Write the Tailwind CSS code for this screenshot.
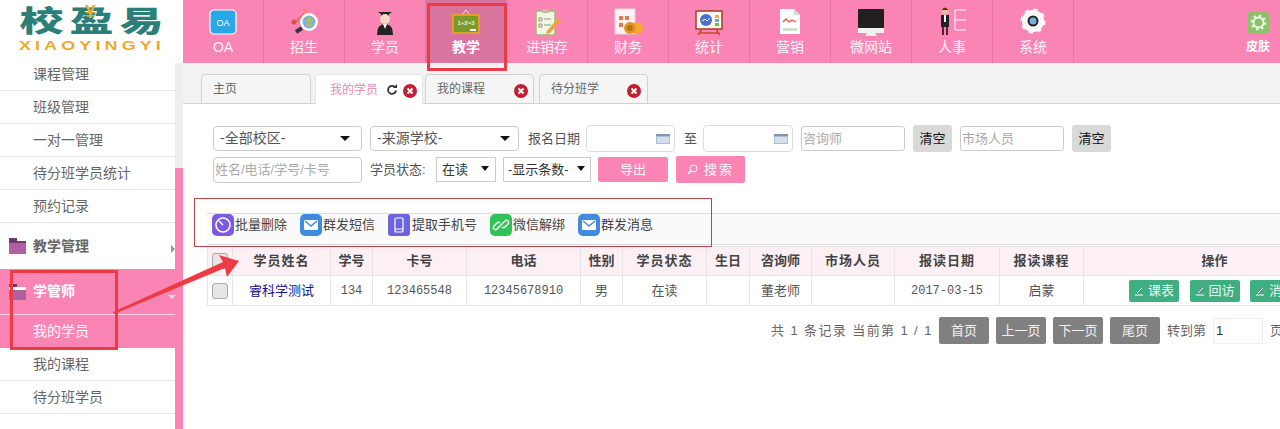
<!DOCTYPE html>
<html lang="zh-CN">
<head>
  <meta charset="UTF-8" />
  <title>校盈易 - 我的学员</title>
  <script src="https://cdn.jsdelivr.net/npm/@tailwindcss/browser@4"></script>
</head>
<body class="relative h-[429px] w-[1280px] overflow-hidden bg-white font-['Liberation_Sans','Noto_Sans_CJK_SC',sans-serif] text-[13px] text-[#555]">

  <!-- Header -->
  <header class="flex h-[63px] bg-[#fa85b5]">
    <div class="relative flex w-[183px] flex-col items-center overflow-hidden bg-white pt-[8px]">
      <div class="flex h-[28px] origin-top scale-y-[0.66] items-start gap-[6px] text-[44px] leading-[44px] font-black text-[#2b7f78]"><span>校</span><span>盈</span><span>易</span></div>
      <span class="absolute top-[2px] left-[85px] text-[19px] leading-none font-black text-[#f0a92e]">¥</span>
      <div class="mt-[4px] scale-x-[1.38] font-['Liberation_Sans',sans-serif] text-[13px] leading-[11px] font-bold tracking-[3px] text-[#eda92f]">XIAOYINGYI</div>
    </div>

    <nav class="flex flex-1 text-[14px] text-white/90">
      <a class="flex w-[81px] flex-col items-center border-r border-[#e873a4] pt-[8px]">
        <svg class="h-[28px] w-[32px]" viewBox="0 0 32 28"><rect x="3" y="2" width="26" height="24" rx="4" fill="#2aa7e6" stroke="#fff" stroke-width="1.2"/><text x="16" y="18" font-size="9" fill="#fff" text-anchor="middle" font-family="Liberation Sans">OA</text></svg>
        <span class="mt-[2px] leading-[18px]">OA</span>
      </a>
      <a class="flex w-[81px] flex-col items-center border-r border-[#e873a4] pt-[8px]">
        <svg class="h-[28px] w-[32px]" viewBox="0 0 32 28"><path d="M8 24 14 20" stroke="#334" stroke-width="4"/><path d="M8 14l8-8" stroke="#ef6a55" stroke-width="2"/><circle cx="6" cy="14" r="2.5" fill="#e84a4a"/><circle cx="17" cy="3" r="2" fill="#ee8b55"/><circle cx="21" cy="14" r="9" fill="#fff"/><circle cx="21" cy="14" r="6.5" fill="#7fb2d8"/><circle cx="21" cy="12" r="2.5" fill="#b5c83a"/><path d="M17 18q4-5 8 0z" fill="#b5c83a"/></svg>
        <span class="mt-[2px] leading-[18px]">招生</span>
      </a>
      <a class="flex w-[81px] flex-col items-center border-r border-[#e873a4] pt-[8px]">
        <svg class="h-[28px] w-[32px]" viewBox="0 0 32 28"><path d="M9 4h14l-3 2v3h-8V6z" fill="#222"/><circle cx="16" cy="11" r="5" fill="#f4d9c4"/><path d="M8 27q0-11 8-11t8 11z" fill="#222"/><path d="M14 16l2 5 2-5z" fill="#fff"/></svg>
        <span class="mt-[2px] leading-[18px]">学员</span>
      </a>
      <a class="flex w-[81px] flex-col items-center border-r border-[#e873a4] bg-[#d9749f] pt-[8px] font-bold text-white">
        <svg class="h-[28px] w-[32px]" viewBox="0 0 32 28"><path d="M12 7l4-5 4 5" fill="none" stroke="#f4e3d0" stroke-width="1"/><rect x="3" y="7" width="26" height="18" fill="#7a9a2c" stroke="#eba51f" stroke-width="1.6"/><text x="16" y="17" font-size="6" fill="#f3f3d8" text-anchor="middle" font-family="Liberation Sans">1+2=3</text><rect x="20" y="21" width="6" height="2" fill="#fff"/></svg>
        <span class="mt-[2px] leading-[18px]">教学</span>
      </a>
      <a class="flex w-[81px] flex-col items-center border-r border-[#e873a4] pt-[8px]">
        <svg class="h-[28px] w-[32px]" viewBox="0 0 32 28"><rect x="5" y="3" width="19" height="24" rx="1.5" fill="#f2f4e6" stroke="#9cbc72" stroke-width="1.5"/><rect x="11" y="1" width="7" height="4" fill="#c9b9a4"/><path d="M8 10h3v3H8zM8 16h3v3H8zM13 11h7M13 17h7" stroke="#8a9a7a" fill="none"/><path d="M16 23 27 10l3 2-11 13-4 1z" fill="#f0a13a"/></svg>
        <span class="mt-[2px] leading-[18px]">进销存</span>
      </a>
      <a class="flex w-[81px] flex-col items-center border-r border-[#e873a4] pt-[8px]">
        <svg class="h-[28px] w-[32px]" viewBox="0 0 32 28"><rect x="3" y="1" width="20" height="25" fill="#fdf3f6" stroke="#e8d5dc"/><path d="M7 8h4v4H7zM13 8h4v4h-4zM7 15h4v4H7z" fill="#e87a50"/><circle cx="25" cy="20" r="6" fill="#f4a933"/><circle cx="18" cy="20" r="6" fill="#e59420"/><circle cx="18" cy="20" r="3" fill="#b97316"/></svg>
        <span class="mt-[2px] leading-[18px]">财务</span>
      </a>
      <a class="flex w-[81px] flex-col items-center border-r border-[#e873a4] pt-[8px]">
        <svg class="h-[28px] w-[32px]" viewBox="0 0 32 28"><rect x="3" y="3" width="26" height="18" fill="#fdf5f0" stroke="#a5482f" stroke-width="1.6"/><circle cx="13" cy="12" r="6" fill="#4a6fd0"/><path d="M9 13l3-2 2 2 3-3" stroke="#fff" fill="none"/><path d="M22 7h4v3h-4z" fill="#f0b040"/><path d="M22 11h4v3h-4z" fill="#5bb0d8"/><path d="M22 15h4v3h-4z" fill="#6cb86c"/><path d="M9 21 5 27M23 21l4 6M6 25h20" stroke="#c8492b" stroke-width="1.5"/></svg>
        <span class="mt-[2px] leading-[18px]">统计</span>
      </a>
      <a class="flex w-[81px] flex-col items-center border-r border-[#e873a4] pt-[8px]">
        <svg class="h-[28px] w-[32px]" viewBox="0 0 32 28"><path d="M6 1h14l6 6v19H6z" fill="#fff"/><path d="M20 1l6 6h-6z" fill="#d9d9d9"/><path d="M9 14l3-3 3 3 3-2 4 2" stroke="#e0553d" stroke-width="1.3" fill="none"/><path d="M9 20h14v3H9z" fill="#cfe3c8"/></svg>
        <span class="mt-[2px] leading-[18px]">营销</span>
      </a>
      <a class="flex w-[81px] flex-col items-center border-r border-[#e873a4] pt-[8px]">
        <svg class="h-[28px] w-[32px]" viewBox="0 0 32 28"><rect x="3" y="1" width="26" height="19" rx="1" fill="#231f20"/><rect x="3" y="20" width="26" height="5" fill="#f2f2f2"/><path d="M12 25h8l2 3H10z" fill="#f2f2f2"/></svg>
        <span class="mt-[2px] leading-[18px]">微网站</span>
      </a>
      <a class="flex w-[81px] flex-col items-center border-r border-[#e873a4] pt-[6px]">
        <svg class="h-[30px] w-[32px]" viewBox="0 0 32 30"><circle cx="9" cy="5" r="3.6" fill="#e9b99a"/><path d="M5.500 4q3.500-5 7 0z" fill="#6b2b20"/><path d="M5 9h8v12H5z" fill="#222"/><path d="M8 9h2v7H8z" fill="#fff"/><path d="M6 21h2v8H6zM10 21h2v8h-2z" fill="#5b1f1f"/><path d="M19 4v20M19 4h11M19 14h11M19 24h11" stroke="#fff" fill="none"/></svg>
        <span class="mt-[2px] leading-[18px]">人事</span>
      </a>
      <a class="flex w-[81px] flex-col items-center border-r border-[#e873a4] pt-[8px]">
        <svg class="h-[28px] w-[32px]" viewBox="0 0 32 28"><circle cx="16" cy="13" r="9.500" fill="none" stroke="#fff" stroke-width="3"/><circle cx="16" cy="13" r="11" fill="none" stroke="#fff" stroke-width="3" stroke-dasharray="4 4.640"/><circle cx="16" cy="13" r="8" fill="#fff"/><circle cx="16" cy="13" r="5.500" fill="#222"/><circle cx="16" cy="13" r="3.500" fill="#78aee0"/></svg>
        <span class="mt-[2px] leading-[18px]">系统</span>
      </a>
      <a class="ml-auto flex w-[44px] flex-col items-center pt-[12px] text-[12px] font-bold text-white">
        <svg class="h-[21px] w-[21px]" viewBox="0 0 21 21"><rect width="21" height="21" rx="2" fill="#8cc36a"/><circle cx="10.500" cy="10.500" r="5" fill="none" stroke="#eef6e6" stroke-width="2"/><circle cx="10.500" cy="10.500" r="6.800" fill="none" stroke="#eef6e6" stroke-width="2" stroke-dasharray="2.500 2.840"/></svg>
        <span class="mt-[5px] leading-[18px]">皮肤</span>
      </a>
    </nav>
  </header>

  <div class="flex h-[366px]">
    <!-- Sidebar -->
    <aside class="flex w-[183px] shrink-0 overflow-hidden">
      <ul class="w-[175px] text-[14px] text-[#666]">
        <li class="flex h-[28px] items-center border-b border-[#e5e5e5] pb-[4px] pl-[33px]">课程管理</li>
        <li class="flex h-[33px] items-center border-b border-[#e5e5e5] pl-[33px]">班级管理</li>
        <li class="flex h-[33px] items-center border-b border-[#e5e5e5] pl-[33px]">一对一管理</li>
        <li class="flex h-[33px] items-center border-b border-[#e5e5e5] pl-[33px]">待分班学员统计</li>
        <li class="flex h-[33px] items-center border-b border-[#e5e5e5] pl-[33px]">预约记录</li>
        <li class="relative flex h-[46px] items-center gap-[7px] pl-[9px] font-bold">
          <svg class="h-[18px] w-[17px]" viewBox="0 0 17 18"><path d="M0 1h8v3h9v2H0z" fill="#6d3a63"/><path d="M0 6h17v11H0z" fill="#b05fa0"/></svg>
          <span>教学管理</span>
          <span class="absolute top-[22px] right-0 border-y-[4px] border-l-[4px] border-y-transparent border-l-[#999]"></span>
        </li>
        <li class="relative flex h-[46px] items-center gap-[7px] border-b border-[#fbd3e4] bg-[#fa85b5] pl-[9px] font-bold text-white">
          <svg class="h-[18px] w-[17px]" viewBox="0 0 17 18"><path d="M0 1h8v3h9v2H0z" fill="#6d3a63"/><path d="M0 4h17v3H0z" fill="#fff"/><path d="M0 7h17v10H0z" fill="#b05fa0"/></svg>
          <span>学管师</span>
          <span class="absolute top-[26px] right-[-1px] border-x-[4px] border-t-[4px] border-x-transparent border-t-[#fbd3e4]"></span>
        </li>
        <li class="flex h-[33px] items-center bg-[#fa85b5] pl-[33px] text-white">我的学员</li>
        <li class="flex h-[33px] items-center border-b border-[#e5e5e5] pl-[33px]">我的课程</li>
        <li class="flex h-[33px] items-center border-b border-[#e5e5e5] pl-[33px]">待分班学员</li>
        <li class="flex h-[33px] items-center pl-[9px]">
          <svg class="mt-[24px] h-[18px] w-[17px]" viewBox="0 0 17 18"><path d="M0 1h8v3h9v2H0z" fill="#6d3a63"/><path d="M0 6h17v11H0z" fill="#b05fa0"/></svg>
        </li>
      </ul>
      <div class="flex w-[8px] flex-col">
        <div class="h-[105px] bg-[#eeeeee]"></div>
        <div class="flex-1 bg-[#fa85b5]"></div>
      </div>
    </aside>

    <!-- Main -->
    <main class="min-w-0 flex-1 overflow-hidden">
      <!-- Tabs -->
      <div class="flex h-[41px] items-end border-b border-[#d5d5d5] bg-[#f3f3f3] pl-[18px] text-[12px]">
        <div class="-mb-px flex h-[30px] w-[110px] items-center rounded-t border border-[#d0d0d0] bg-[#f5f5f5] pl-[11px] text-[#666]">主页</div>
        <div class="relative -mb-px ml-[4px] flex h-[30px] w-[108px] items-center rounded-t border border-b-0 border-[#e5e5e5] bg-white pl-[14px] text-[#e58ab5]">
          我的学员
          <svg class="absolute top-[9px] left-[70px] h-[12px] w-[12px]" viewBox="0 0 12 12"><path d="M10 6.500A4 4 0 1 1 8.800 3" fill="none" stroke="#333" stroke-width="1.800"/><path d="M7 4h4V0z" fill="#333"/></svg>
          <svg class="absolute top-[9px] left-[87px] h-[14px] w-[14px]" viewBox="0 0 14 14"><circle cx="7" cy="7" r="7" fill="#c0202f"/><path d="M4.500 4.500l5 5M9.500 4.500l-5 5" stroke="#fff" stroke-width="2"/></svg>
        </div>
        <div class="relative -mb-px ml-[2px] flex h-[30px] w-[109px] items-center rounded-t border border-[#d0d0d0] bg-[#f5f5f5] pl-[11px] text-[#666]">
          我的课程
          <svg class="absolute top-[9px] left-[88px] h-[14px] w-[14px]" viewBox="0 0 14 14"><circle cx="7" cy="7" r="7" fill="#c0202f"/><path d="M4.500 4.500l5 5M9.500 4.500l-5 5" stroke="#fff" stroke-width="2"/></svg>
        </div>
        <div class="relative -mb-px ml-[5px] flex h-[30px] w-[109px] items-center rounded-t border border-[#d0d0d0] bg-[#f5f5f5] pl-[11px] text-[#666]">
          待分班学
          <svg class="absolute top-[9px] left-[87px] h-[14px] w-[14px]" viewBox="0 0 14 14"><circle cx="7" cy="7" r="7" fill="#c0202f"/><path d="M4.500 4.500l5 5M9.500 4.500l-5 5" stroke="#fff" stroke-width="2"/></svg>
        </div>
      </div>

      <!-- Search -->
      <div class="pt-[20px] pl-[30px]">
        <div class="flex h-[29px] items-center">
          <div class="relative w-[149px]">
            <select class="h-[25px] w-full appearance-none rounded-[4px] border border-[#ccc] bg-white pl-[6px] text-[14px] text-[#555]"><option>-全部校区-</option></select>
            <span class="absolute top-[10px] right-[12px] border-x-[5px] border-t-[5px] border-x-transparent border-t-[#111]"></span>
          </div>
          <div class="relative ml-[8px] w-[149px]">
            <select class="h-[25px] w-full appearance-none rounded-[4px] border border-[#ccc] bg-white pl-[6px] text-[14px] text-[#555]"><option>-来源学校-</option></select>
            <span class="absolute top-[10px] right-[9px] border-x-[5px] border-t-[5px] border-x-transparent border-t-[#111]"></span>
          </div>
          <span class="ml-[9px] w-[58px]">报名日期</span>
          <div class="relative w-[89px]">
            <input class="h-[27px] w-full rounded-[4px] border border-[#ddd] bg-white" />
            <svg class="absolute top-[9px] right-[5px] h-[10px] w-[14px]" viewBox="0 0 14 10"><rect width="14" height="10" fill="#a9bfd9"/><rect y="0" width="14" height="2" fill="#7d97b8"/><path d="M1 3h12v6H1z" fill="#d7dfe8"/></svg>
          </div>
          <span class="ml-[9px] w-[19px]">至</span>
          <div class="relative w-[90px]">
            <input class="h-[27px] w-full rounded-[4px] border border-[#ddd] bg-white" />
            <svg class="absolute top-[9px] right-[5px] h-[10px] w-[14px]" viewBox="0 0 14 10"><rect width="14" height="10" fill="#a9bfd9"/><rect y="0" width="14" height="2" fill="#7d97b8"/><path d="M1 3h12v6H1z" fill="#d7dfe8"/></svg>
          </div>
          <input placeholder="咨询师" class="ml-[8px] h-[25px] w-[104px] rounded-[3px] border border-[#ccc] px-[1px] placeholder:text-[#aaa]" />
          <button class="ml-[8px] h-[27px] w-[39px] rounded-[3px] bg-[#d9d9d9] text-[#111]">清空</button>
          <input placeholder="市场人员" class="ml-[8px] h-[25px] w-[104px] rounded-[3px] border border-[#ccc] px-[1px] placeholder:text-[#aaa]" />
          <button class="ml-[8px] h-[27px] w-[39px] rounded-[3px] bg-[#d9d9d9] text-[#111]">清空</button>
        </div>
        <div class="mt-[2px] flex h-[29px] items-center">
          <input placeholder="姓名/电话/学号/卡号" class="h-[26px] w-[149px] rounded-[4px] border border-[#ccc] px-[1px] placeholder:text-[#aaa]" />
          <span class="ml-[8px] w-[66px]">学员状态:</span>
          <div class="relative w-[60px]">
            <select class="h-[25px] w-full appearance-none border border-[#ccc] bg-white pl-[5px] text-[#333]"><option>在读</option></select>
            <span class="absolute top-[9px] right-[7px] border-x-[4px] border-t-[5px] border-x-transparent border-t-[#111]"></span>
          </div>
          <div class="relative ml-[7px] w-[88px]">
            <select class="h-[25px] w-full appearance-none border border-[#ccc] bg-white pl-[4px] text-[#333]"><option>-显示条数-</option></select>
            <span class="absolute top-[9px] right-[6px] border-x-[4px] border-t-[5px] border-x-transparent border-t-[#111]"></span>
          </div>
          <button class="ml-[7px] h-[25px] w-[70px] rounded-[2px] bg-[#fa85b5] text-white/90">导出</button>
          <button class="ml-[8px] flex h-[27px] w-[69px] items-center justify-center gap-[6px] rounded-[2px] bg-[#fa85b5] text-white/90">
            <svg class="h-[11px] w-[11px]" viewBox="0 0 11 11"><circle cx="6.500" cy="4.500" r="3.500" fill="none" stroke="#fff"/><path d="M4 7 1 10" stroke="#fff" stroke-width="1.400"/></svg>
            <span class="tracking-[2px]">搜索</span>
          </button>
        </div>
      </div>

      <!-- Toolbar + table -->
      <div class="mt-[29px] ml-[24px]">
        <div class="flex h-[32px] items-start gap-[13px] border-y border-[#ddd] bg-[#fafafa] pl-[5px] text-[#444]">
          <span class="flex items-center gap-[1px]">
            <svg class="h-[22px] w-[22px]" viewBox="0 0 22 22"><rect width="22" height="22" rx="5" fill="#7b59e0"/><circle cx="11" cy="11" r="7" fill="none" stroke="#fff" stroke-width="1.600"/><path d="M7 7l4 4" stroke="#fff" stroke-width="1.600"/></svg>批量删除
          </span>
          <span class="flex items-center gap-[1px]">
            <svg class="h-[22px] w-[22px]" viewBox="0 0 22 22"><rect width="22" height="22" rx="5" fill="#3f8be0"/><rect x="4" y="6" width="14" height="10" rx="1" fill="#fff"/><path d="M5 7l6 5 6-5" stroke="#3f8be0" stroke-width="1.500" fill="none"/></svg>群发短信
          </span>
          <span class="flex items-center gap-[2px]">
            <svg class="h-[22px] w-[22px]" viewBox="0 0 22 22"><rect width="22" height="22" rx="3" fill="#6d63dc"/><rect x="7" y="4" width="8" height="14" rx="1" fill="none" stroke="#fff" stroke-width="1.200"/><path d="M7 15h8" stroke="#fff"/></svg>提取手机号
          </span>
          <span class="flex items-center gap-[1px]">
            <svg class="h-[22px] w-[22px]" viewBox="0 0 22 22"><rect width="22" height="22" rx="5" fill="#2fc257"/><path d="M9 13l-2 2a2 2 0 0 1-3-3l3-3a2 2 0 0 1 3 0M13 9l2-2a2 2 0 0 1 3 3l-3 3a2 2 0 0 1-3 0M9 13l4-4" stroke="#fff" stroke-width="1.500" fill="none"/></svg>微信解绑
          </span>
          <span class="flex items-center gap-[1px]">
            <svg class="h-[22px] w-[22px]" viewBox="0 0 22 22"><rect width="22" height="22" rx="5" fill="#3f8be0"/><rect x="4" y="6" width="14" height="10" rx="1" fill="#fff"/><path d="M5 7l6 5 6-5" stroke="#3f8be0" stroke-width="1.500" fill="none"/></svg>群发消息
          </span>
        </div>

        <table class="mt-[1px] w-[1138px] table-fixed border-collapse border-t border-[#f3b9cf] text-center">
          <colgroup>
            <col class="w-[25px]" /><col class="w-[98px]" /><col class="w-[42px]" /><col class="w-[94px]" /><col class="w-[114px]" /><col class="w-[42px]" /><col class="w-[84px]" /><col class="w-[43px]" /><col class="w-[62px]" /><col class="w-[83px]" /><col class="w-[105px]" /><col class="w-[84px]" /><col class="w-[262px]" />
          </colgroup>
          <thead class="bg-[#fcf0f5] text-[13px] font-bold text-[#444]">
            <tr class="h-[29px]">
              <th class="border border-[#e6e6e6]"><span class="mx-auto block h-[16px] w-[16px] rounded-[3px] border border-[#aaa] bg-[#e6e6e6]"></span></th>
              <th class="border border-[#e6e6e6] tracking-[1px]">学员姓名</th>
              <th class="border border-[#e6e6e6]">学号</th>
              <th class="border border-[#e6e6e6]">卡号</th>
              <th class="border border-[#e6e6e6]">电话</th>
              <th class="border border-[#e6e6e6]">性别</th>
              <th class="border border-[#e6e6e6] tracking-[1px]">学员状态</th>
              <th class="border border-[#e6e6e6]">生日</th>
              <th class="border border-[#e6e6e6]">咨询师</th>
              <th class="border border-[#e6e6e6] tracking-[1px]">市场人员</th>
              <th class="border border-[#e6e6e6] tracking-[1px]">报读日期</th>
              <th class="border border-[#e6e6e6] tracking-[1px]">报读课程</th>
              <th class="border border-[#e6e6e6]">操作</th>
            </tr>
          </thead>
          <tbody class="text-[#555]">
            <tr class="h-[30px]">
              <td class="border border-[#e6e6e6]"><span class="mx-auto block h-[16px] w-[16px] rounded-[3px] border border-[#aaa] bg-[#e6e6e6]"></span></td>
              <td class="border border-[#e6e6e6] text-[#14148c]">睿科学测试</td>
              <td class="border border-[#e6e6e6] font-['Liberation_Mono',monospace] text-[12px]">134</td>
              <td class="border border-[#e6e6e6] font-['Liberation_Mono',monospace] text-[12px]">123465548</td>
              <td class="border border-[#e6e6e6] font-['Liberation_Mono',monospace] text-[12px]">12345678910</td>
              <td class="border border-[#e6e6e6]">男</td>
              <td class="border border-[#e6e6e6]">在读</td>
              <td class="border border-[#e6e6e6]"></td>
              <td class="border border-[#e6e6e6]">董老师</td>
              <td class="border border-[#e6e6e6]"></td>
              <td class="border border-[#e6e6e6] font-['Liberation_Mono',monospace] text-[12px]">2017-03-15</td>
              <td class="border border-[#e6e6e6]">启蒙</td>
              <td class="border border-[#e6e6e6] pl-[45px] text-left whitespace-nowrap text-white/90">
                <a class="inline-flex h-[22px] w-[50px] items-center justify-center gap-[4px] rounded-[2px] bg-[#3fae82]">
                  <svg class="h-[10px] w-[10px]" viewBox="0 0 10 10"><path d="M1 9h8M3 7l5-5" stroke="#fff"/></svg>课表</a>
                <a class="ml-[7px] inline-flex h-[22px] w-[50px] items-center justify-center gap-[4px] rounded-[2px] bg-[#3fae82]">
                  <svg class="h-[10px] w-[10px]" viewBox="0 0 10 10"><path d="M1 9h8M3 7l5-5" stroke="#fff"/></svg>回访</a>
                <a class="ml-[7px] inline-flex h-[22px] w-[50px] items-center justify-center gap-[4px] rounded-[2px] bg-[#3fae82]">
                  <svg class="h-[10px] w-[10px]" viewBox="0 0 10 10"><path d="M1 9h8M3 7l5-5" stroke="#fff"/></svg>消息</a>
              </td>
            </tr>
          </tbody>
        </table>

        <!-- Pager -->
        <div class="mt-[11px] flex h-[27px] items-center pl-[564px] whitespace-nowrap text-[13px] text-[#666]">
          <span class="w-[168px] shrink-0 tracking-[1.4px]">共 1 条记录 当前第 1 / 1</span>
          <button class="h-[27px] w-[50px] shrink-0 rounded-[2px] bg-[#808080] text-white/90">首页</button>
          <button class="ml-[7px] h-[27px] w-[50px] shrink-0 rounded-[2px] bg-[#808080] text-white/90">上一页</button>
          <button class="ml-[7px] h-[27px] w-[50px] shrink-0 rounded-[2px] bg-[#808080] text-white/90">下一页</button>
          <button class="ml-[7px] h-[27px] w-[50px] shrink-0 rounded-[2px] bg-[#808080] text-white/90">尾页</button>
          <span class="ml-[7px] w-[46px] shrink-0">转到第</span>
          <input value="1" class="h-[26px] w-[50px] shrink-0 border border-[#eee] pl-[2px] text-[#333]" />
          <span class="ml-[7px] shrink-0">页</span>
        </div>
      </div>
    </main>
  </div>

  <!-- Red annotations drawn over the screenshot -->
  <div class="absolute top-[3px] left-[427px] h-[68px] w-[80px] border-[3px] border-[#ee3b43]"></div>
  <div class="absolute top-[270px] left-[10px] h-[80px] w-[108px] border-[3px] border-[#ee3b43]"></div>
  <div class="absolute top-[198px] left-[194px] h-[49px] w-[518px] border border-[#c0424a]"></div>
  <svg class="absolute top-[250px] left-[110px] h-[70px] w-[135px]" viewBox="110 250 135 70"><path d="M113 312 223 262 219 255 239 261 227 277 225 268 114 314z" fill="#ee3b43"/></svg>
</body>
</html>
